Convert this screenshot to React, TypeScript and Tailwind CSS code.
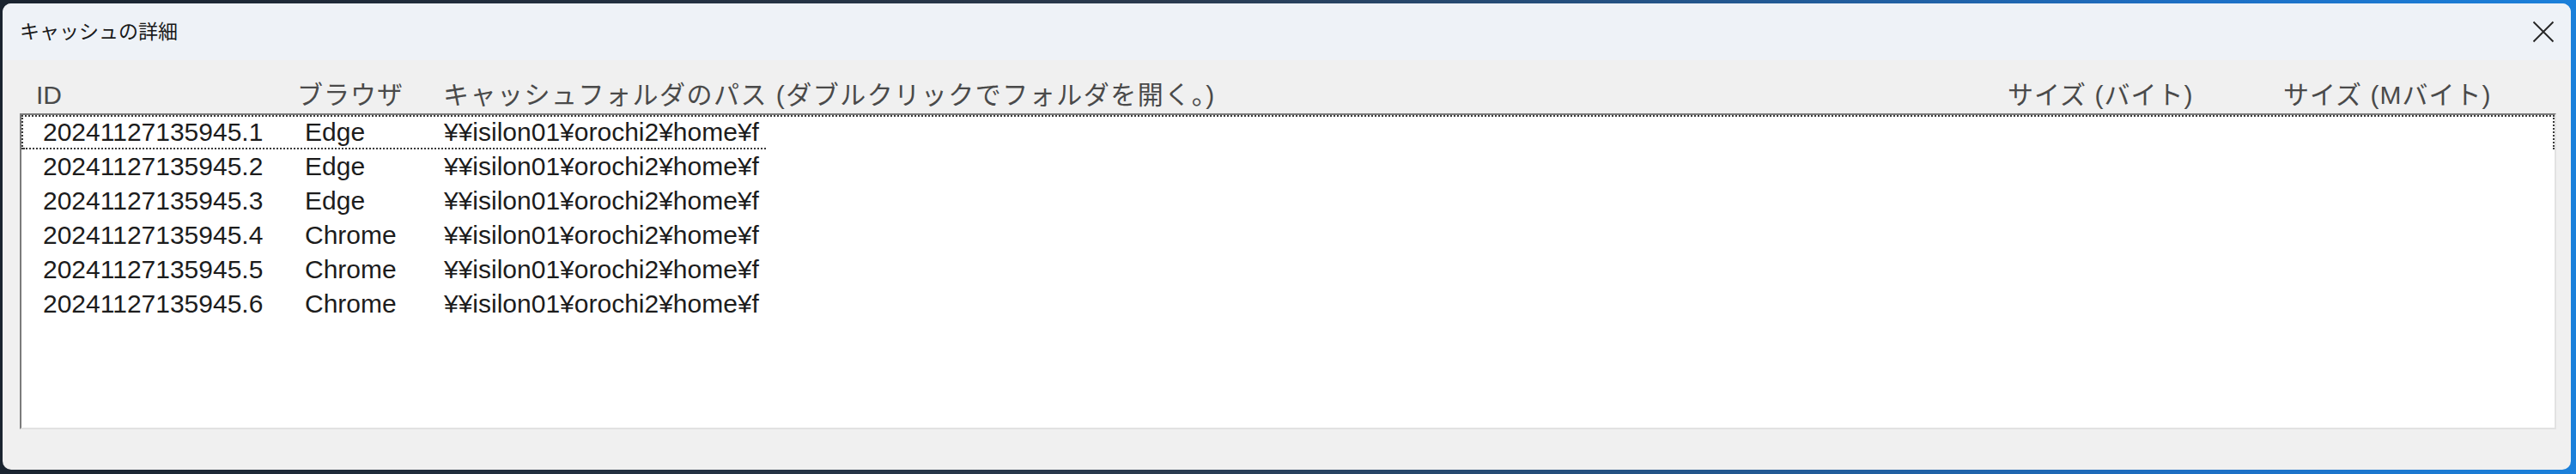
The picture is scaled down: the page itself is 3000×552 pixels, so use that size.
import React from 'react'

const rows = [
  { id: '20241127135945.1', browser: 'Edge' },
  { id: '20241127135945.2', browser: 'Edge' },
  { id: '20241127135945.3', browser: 'Edge' },
  { id: '20241127135945.4', browser: 'Chrome' },
  { id: '20241127135945.5', browser: 'Chrome' },
  { id: '20241127135945.6', browser: 'Chrome' },
]

const path = '¥¥isilon01¥orochi2¥home¥f'

export default function App() {
  return (
    <div className="w-[3000px] h-[552px] overflow-hidden bg-[linear-gradient(90deg,#1a2430_0%,#2a3a4e_45%,#1d6fc4_85%,#1b80da_100%)] pt-[4px] pl-[3px] font-['Liberation_Sans','Noto_Sans_CJK_JP',sans-serif]">
      <div className="w-[2991px] h-[543px] rounded-[10px] overflow-hidden bg-[#f0f0f0] flex flex-col">
        {/* タイトルバー */}
        <div className="h-[66px] shrink-0 bg-[#eef2f7] flex items-center justify-between pl-[20px] pr-[19px]">
          <span className="text-[23px] leading-none text-[#1a1a1a]">キャッシュの詳細</span>
          <svg width="26" height="26" viewBox="0 0 26 26" className="block">
            <path d="M1.5 1.5 L24.5 24.5 M24.5 1.5 L1.5 24.5" stroke="#262626" strokeWidth="1.9" fill="none" />
          </svg>
        </div>

        <div className="flex-1 flex flex-col pl-[20px] pr-[17px]">
          {/* 列ヘッダー */}
          <div className="mt-[20px] h-[42px] flex items-center text-[30px] leading-none text-[#4a4a4a] whitespace-nowrap">
            <div className="w-[312px] pl-[19px]">ID</div>
            <div className="w-[170px] pl-[11px] tracking-[1px]">ブラウザ</div>
            <div className="w-[1822px] pl-[11px] tracking-[1.5px]">キャッシュフォルダのパス (ダブルクリックでフォルダを開く。)</div>
            <div className="w-[321px] pl-[11px] tracking-[1px]">サイズ (バイト)</div>
            <div className="flex-1 pl-[11px] tracking-[1px]">サイズ (Mバイト)</div>
          </div>

          {/* 一覧 */}
          <div className="h-[368px] bg-white border-t-2 border-l-2 border-t-[#7b7b7b] border-l-[#7b7b7b] border-b-2 border-r-2 border-b-[#e2e2e2] border-r-[#e2e2e2]">
            {rows.map((r, i) => (
              <div
                key={r.id}
                className={
                  i === 0
                    ? 'h-[40px] flex border-x-2 border-t-2 border-dotted border-[#3a3a3a]'
                    : 'h-[40px] flex border-x-2 border-t-2 border-transparent'
                }
              >
                <div
                  className={
                    i === 0
                      ? 'w-[865px] h-full flex items-center border-b-2 border-dotted border-[#3a3a3a] text-[30px] leading-none text-[#1c1c1c] whitespace-nowrap'
                      : 'w-[865px] h-full flex items-center border-b-2 border-transparent text-[30px] leading-none text-[#1c1c1c] whitespace-nowrap'
                  }
                >
                  <div className="w-[308px] pl-[23px]">{r.id}</div>
                  <div className="w-[170px] pl-[20px]">{r.browser}</div>
                  <div className="w-[387px] pl-[12px] overflow-hidden">{path}</div>
                </div>
                <div className="flex-1" />
              </div>
            ))}
          </div>
        </div>
      </div>
    </div>
  )
}
